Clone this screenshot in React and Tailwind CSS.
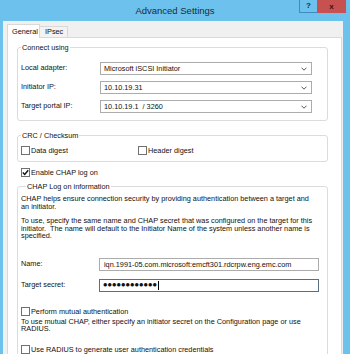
function Chevron() {
  return (
    <svg width="6" height="4" viewBox="0 0 6 4" className="shrink-0">
      <path d="M0.5 0.7 L3 3.2 L5.5 0.7" fill="none" stroke="#555" strokeWidth="1" />
    </svg>
  );
}

function Select({ value }) {
  return (
    <div className="flex items-center h-[13px] w-[212px] border border-[#acacac] bg-white pl-[3px] pr-[4px]">
      <span className="flex-1 leading-none whitespace-pre">{value}</span>
      <Chevron />
    </div>
  );
}

function Checkbox({ checked }) {
  return (
    <div className="w-[9px] h-[9px] border border-[#707070] bg-white flex items-center justify-center shrink-0">
      {checked && (
        <svg width="7" height="7" viewBox="0 0 7 7">
          <path d="M0.8 3.6 L2.7 5.5 L6.2 1.2" fill="none" stroke="#111" strokeWidth="1.4" />
        </svg>
      )}
    </div>
  );
}

function Check({ checked, label, className = "" }) {
  return (
    <div className={"flex items-center h-[9px] gap-[1px] " + className}>
      <Checkbox checked={checked} />
      <span className="leading-none whitespace-nowrap">{label}</span>
    </div>
  );
}

export default function App() {
  return (
    <div className="w-[350px] h-[354px] overflow-hidden bg-[#6cc2ec] flex flex-col font-['Liberation_Sans',Arial,sans-serif] text-[7.3px] text-[#111]">
      {/* title bar */}
      <div className="flex h-[21px] shrink-0">
        <div className="w-[51px]" />
        <div className="flex-1 text-center text-[9.5px] leading-[21px] text-[#1d2b38]">Advanced Settings</div>
        <div className="flex w-[51px] pr-[4px] items-start">
          <div className="w-[18px] h-[13px] border-l border-b border-[#3d8cbd] flex items-center justify-center text-[8px] font-bold text-[#1d2b38]">?</div>
          <div className="w-[29px] h-[13px] bg-[#c75050] flex items-center justify-center text-[8px] font-bold text-[#3a1616]">x</div>
        </div>
      </div>

      {/* dialog body */}
      <div className="flex-1 flex flex-col ml-[3px] mr-[7px] bg-[#f0f0f0] pl-[4px] pr-[1px] pt-[3px]">
        <div className="flex items-end h-[13px]">
          <div className="relative z-10 h-[14px] -mb-px w-[33px] bg-white border border-b-0 border-[#d9d9d9] flex items-center pl-[4px] leading-none">General</div>
          <div className="h-[11px] w-[28px] border border-l-0 border-[#d9d9d9] border-b-0 bg-[#f3f3f3] flex items-center pl-[5px] leading-none">IPsec</div>
        </div>

        <div className="flex-1 bg-white border border-[#d9d9d9] flex flex-col pl-[9px] pr-[13px]">
          <fieldset className="mt-[5px] border border-[#dcdcdc] rounded-[3px] pl-[3px] pr-[15px] pt-[10px] pb-[7px] flex flex-col gap-[6px]">
            <legend className="px-[1px] leading-[9px]">Connect using</legend>
            <div className="flex items-center">
              <span className="w-[79px]">Local adapter:</span>
              <Select value="Microsoft iSCSI Initiator" />
            </div>
            <div className="flex items-center">
              <span className="w-[79px]">Initiator IP:</span>
              <Select value="10.10.19.31" />
            </div>
            <div className="flex items-center">
              <span className="w-[79px]">Target portal IP:</span>
              <Select value="10.10.19.1  / 3260" />
            </div>
          </fieldset>

          <fieldset className="mt-[10px] border border-[#dcdcdc] rounded-[3px] pl-[3px] pt-[6px] pb-[6px] flex">
            <legend className="px-[1px] leading-[9px]">CRC / Checksum</legend>
            <Check label="Data digest" className="w-[117px]" />
            <Check label="Header digest" />
          </fieldset>

          <Check checked label="Enable CHAP log on" className="mt-[6px] ml-[4px]" />

          <fieldset className="mt-[5px] border border-[#dcdcdc] rounded-[3px] pl-[3px] pr-[8px] pt-[4px] pb-[20px] flex flex-col">
            <legend className="ml-[5px] px-[1px] leading-[9px]">CHAP Log on information</legend>
            <p className="leading-[8px] whitespace-nowrap">
              CHAP helps ensure connection security by providing authentication between a target and
              <br />
              an initiator.
            </p>
            <p className="mt-[6px] leading-[7.6px] whitespace-nowrap">
              To use, specify the same name and CHAP secret that was configured on the target for this
              <br />
              initiator.&nbsp; The name will default to the Initiator Name of the system unless another name is
              <br />
              specified.
            </p>
            <div className="mt-[18px] flex items-center">
              <span className="w-[78px]">Name:</span>
              <div className="h-[13px] w-[220px] border border-[#acacac] bg-white flex items-center pl-[4px] leading-none whitespace-nowrap">
                iqn.1991-05.com.microsoft:emcft301.rdcrpw.eng.emc.com
              </div>
            </div>
            <div className="mt-[8px] flex items-center">
              <span className="w-[78px]">Target secret:</span>
              <div className="h-[13px] w-[220px] border border-[#5b6e80] bg-white flex items-center pl-[3px]">
                {Array.from({ length: 12 }).map((_, i) => (
                  <span key={i} className="w-[4.5px] text-[4.5px] leading-none text-center font-['DejaVu_Sans',sans-serif]">●</span>
                ))}
                <span className="ml-[1px] w-px h-[9px] bg-black" />
              </div>
            </div>
            <Check label="Perform mutual authentication" className="mt-[15px]" />
            <p className="mt-[2px] leading-[7.5px] whitespace-nowrap">
              To use mutual CHAP, either specify an initiator secret on the Configuration page or use
              <br />
              RADIUS.
            </p>
            <Check label="Use RADIUS to generate user authentication credentials" className="mt-[12px]" />
          </fieldset>
        </div>
      </div>
    </div>
  );
}
